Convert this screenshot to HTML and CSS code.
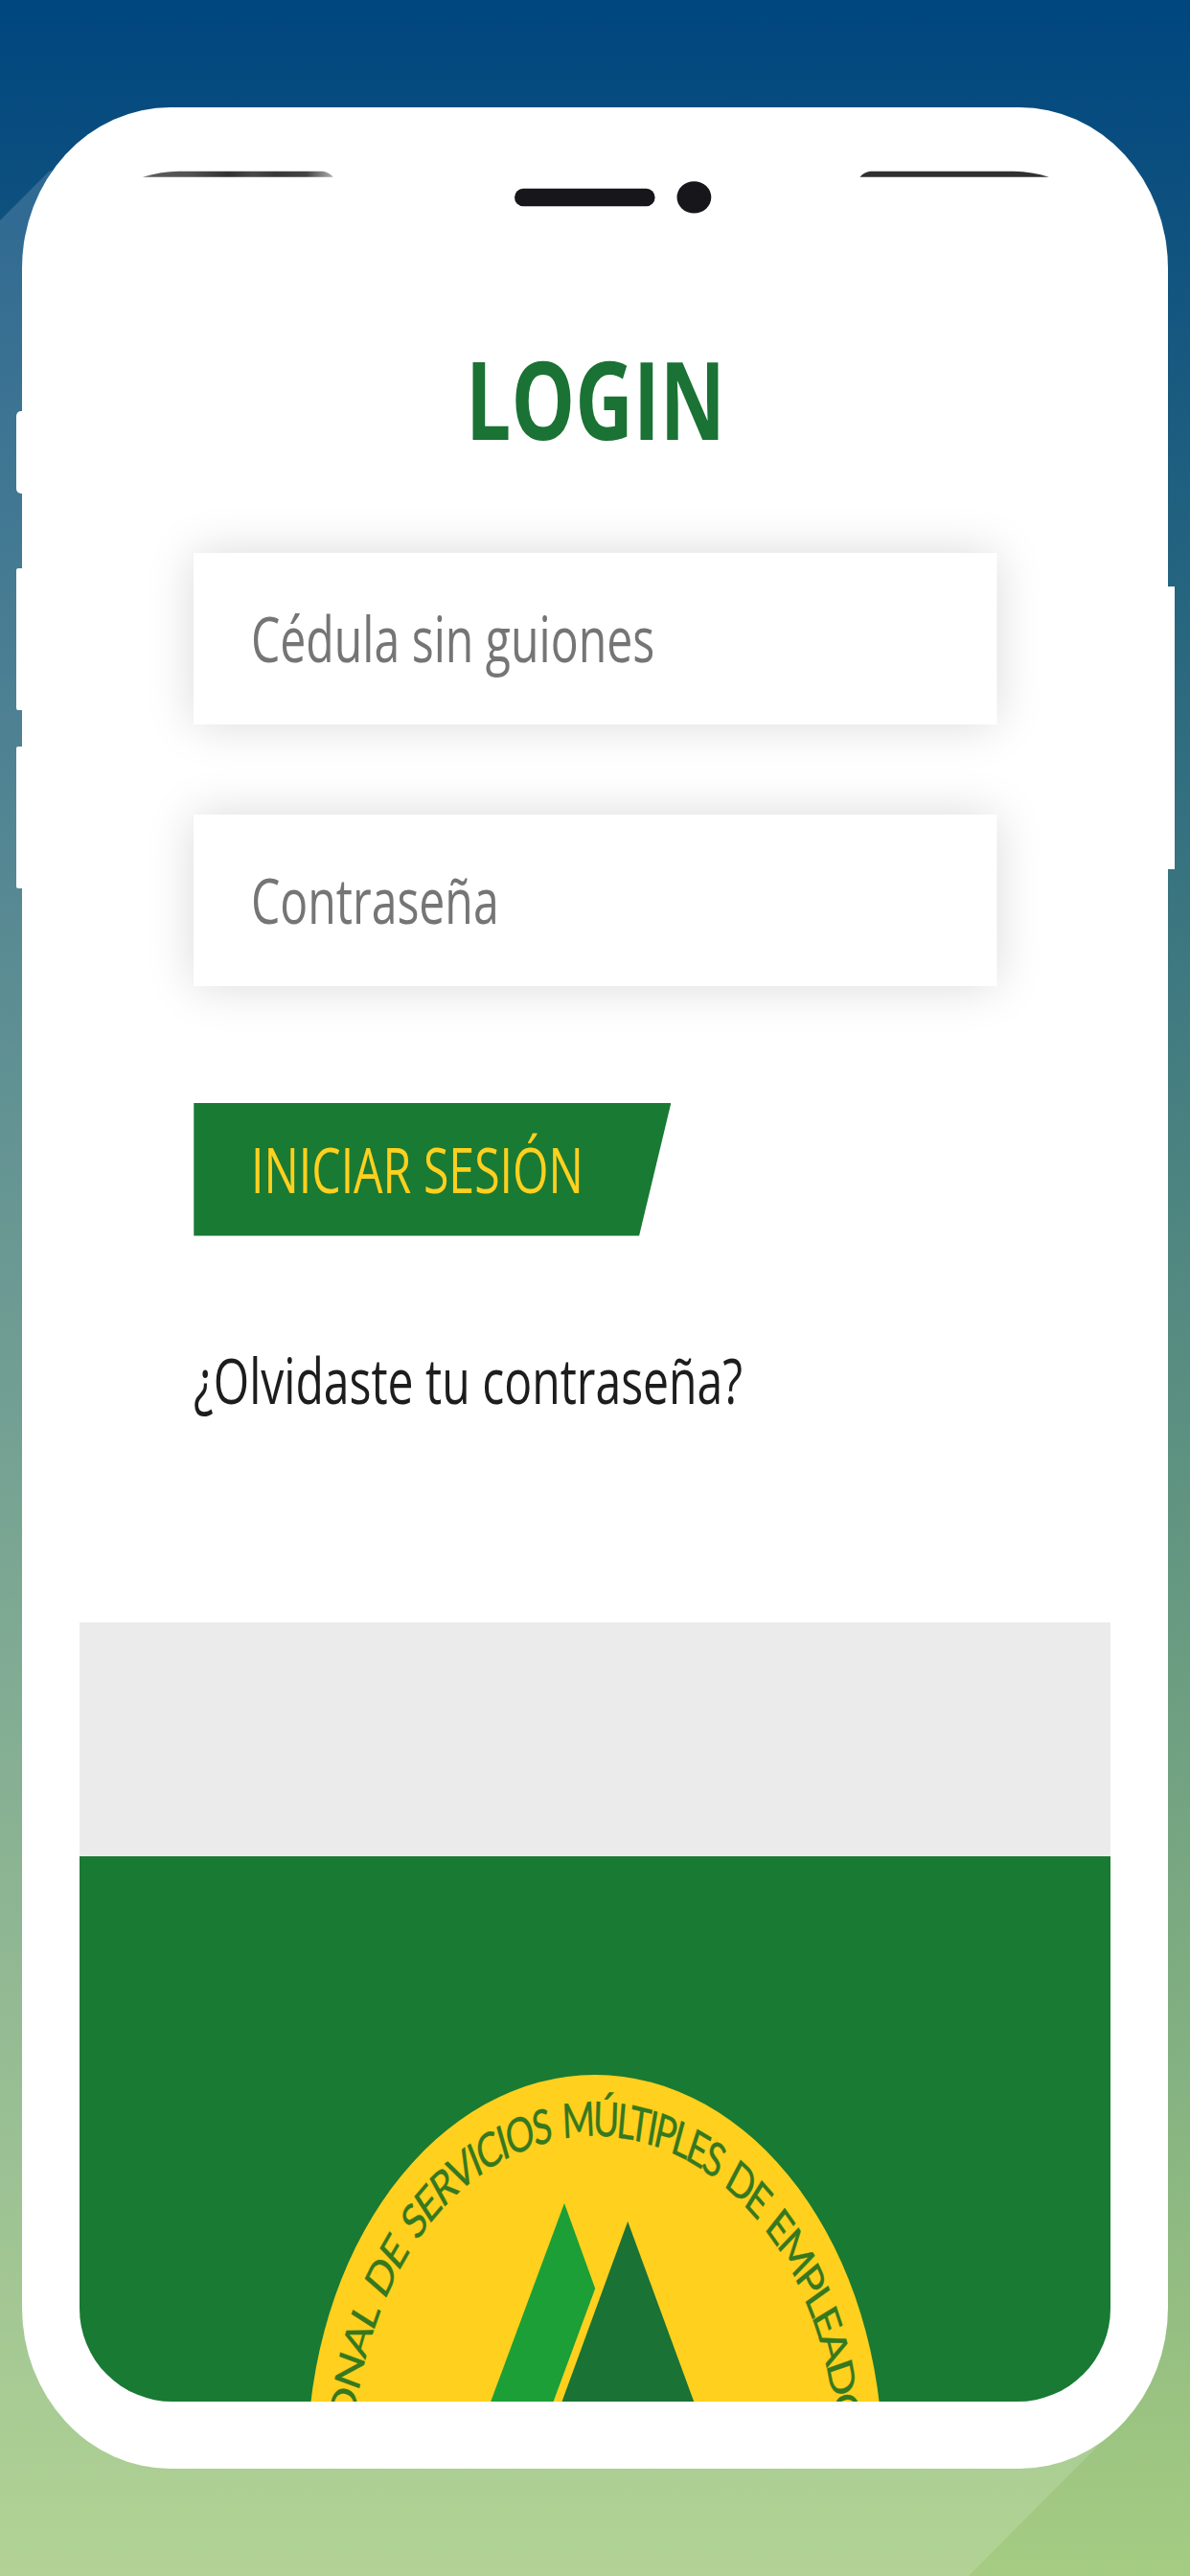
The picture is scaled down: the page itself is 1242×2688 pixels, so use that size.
FILE: index.html
```html
<!DOCTYPE html>
<html lang="es">
<head>
<meta charset="utf-8">
<title>Login</title>
<link rel="stylesheet" href="styles.css">
</head>
<body>
<div class="stage">
  <main class="phone">
    <i class="key key-mute"></i>
    <i class="key key-up"></i>
    <i class="key key-down"></i>
    <i class="key key-power"></i>
    <svg class="notch" width="1197" height="120" viewBox="22.6 111.5 1197 120">
      <defs>
        <linearGradient id="glare" x1="0" x2="1" y1="0" y2="0">
          <stop offset="0" stop-color="#5c5d5c"/>
          <stop offset=".25" stop-color="#515251"/>
          <stop offset=".45" stop-color="#303130"/>
          <stop offset=".58" stop-color="#484948"/>
          <stop offset=".7" stop-color="#363736"/>
          <stop offset=".86" stop-color="#424342"/>
          <stop offset="1" stop-color="#b0b0b0"/>
        </linearGradient>
      </defs>
      <path fill="url(#glare)" d="M148.5 184.3Q168 178.3 186 178.3H336.500Q343 179.500 347.300 184.300Z"/>
      <path fill="#30312f" d="M897 184.300Q901 179.500 908 178.300H1058Q1077 178.800 1094.500 184.300Z"/>
      <rect x="536.600" y="196.300" width="146.600" height="18.400" rx="9" ry="9.200" fill="#17161b"/>
      <ellipse cx="724" cy="205.400" rx="17.900" ry="16.700" fill="#17161b"/>
    </svg>
    <section class="screen">
      <form class="login">
        <h1 class="title"><span class="narrow">LOGIN</span></h1>
        <label class="field"><span class="narrow">Cédula sin guiones</span></label>
        <label class="field"><span class="narrow">Contraseña</span></label>
        <div class="submit"><span class="narrow">INICIAR SESIÓN</span></div>
        <a class="forgot"><span class="narrow">¿Olvidaste tu contraseña?</span></a>
      </form>
      <div class="band"></div>
      <footer class="footer">
        <svg class="logo" width="604" height="341" viewBox="319.800 2165 604 341">
          <ellipse cx="621.800" cy="2569" rx="300.200" ry="404" fill="#ffd01e"/>
          <g transform="translate(621.800 2569) scale(1 1.347)">
            <path id="rim" fill="none" d="M-251.240 24.210A252.400 252.400 0 1 1 251.240 24.210"/>
            <text class="rim-text"><textPath href="#rim" startOffset="51" textLength="743" lengthAdjust="spacing"><tspan class="rim-loose">ONAL DE SERVICIOS </tspan><tspan class="rim-tight">MÚLTIPLES DE EMPLEADO</tspan></textPath></text>
          </g>
          <path fill="#1c9f37" d="M589.800 2299L622 2388L578.400 2506H513Z"/>
          <path fill="#1a7234" d="M656 2318L725 2506H587.300Z"/>
        </svg>
      </footer>
    </section>
  </main>
</div>
</body>
</html>
```
FILE: styles.css
```css
* { box-sizing: border-box; }

body {
  margin: 0;
  font-family: "Open Sans", sans-serif;
}

.stage {
  position: relative;
  width: 1242px;
  height: 2688px;
  padding: 111.5px 22.6px;
  overflow: hidden;
  background: linear-gradient(#00467f, #a5cc82);
}

/* pale diagonal cast behind the handset */
.stage::before {
  content: "";
  position: absolute;
  inset: 0;
  background: rgba(255, 255, 255, .15);
  clip-path: polygon(0 230px, 52px 178px, 600px 300px, 1154px 2544px, 1011px 2688px, 0 2688px);
}

.phone {
  position: relative;
  width: 1196.8px;
  height: 2464.7px;
  padding: 0 60.2px;
  border-radius: 155px / 168px;
  background: #fff;
}

.key {
  position: absolute;
  left: -6px;
  width: 12px;
  border-radius: 5px;
  background: #fff;
}
.key-mute { top: 317px; height: 86px; }
.key-up { top: 481px; height: 148.5px; border-radius: 2px; }
.key-down { top: 667.5px; height: 148px; border-radius: 2px; }
.key-power { top: 500.2px; height: 295px; left: auto; right: -6.3px; border-radius: 0; }

.notch {
  display: block;
  margin-left: -60.2px;
}

.screen {
  display: flex;
  flex-direction: column;
  height: 2274.5px;
  overflow: hidden;
  border-radius: 0 0 97px 97px;
}

.login {
  display: flex;
  flex-direction: column;
  align-items: flex-start;
  height: 1461px;
  padding: 127px 118.500px 0 119.500px;
}

/* the typeface is set condensed */
.narrow {
  display: inline-block;
  white-space: nowrap;
  transform: scaleX(.742);
  transform-origin: left center;
}

.title {
  align-self: center;
  margin: 0 0 105.500px;
  font-size: 113px;
  line-height: 113px;
  color: #1a7234;
}
.title .narrow { transform-origin: center; }

.field {
  position: relative;
  width: 838.500px;
  height: 179px;
  margin-bottom: 93.500px;
  padding-left: 60px;
  font-size: 65.500px;
  line-height: 178px;
  color: #757575;
}
.field::before {
  content: "";
  position: absolute;
  left: 0;
  top: 0;
  width: 134.770%;
  height: 100%;
  transform: scaleX(.742);
  transform-origin: left center;
  background: #fff;
  box-shadow: 0 0 54px rgba(0, 0, 0, .150);
}
.field .narrow {
  position: relative;
  transform: scaleX(.735);
}

.submit {
  width: 498.200px;
  height: 139px;
  margin-top: 28.500px;
  padding-left: 60px;
  background: #197a33;
  color: #ffd01e;
  font-size: 65px;
  line-height: 138px;
  clip-path: polygon(0 0, 100% 0, 93.300% 100%, 0 100%);
}
.submit .narrow { transform: scaleX(.742); }

.forgot {
  margin-top: 116.500px;
  font-size: 65.500px;
  line-height: 68px;
  color: #1d1d1d;
}
.forgot .narrow { transform: scaleX(.734); }

.band {
  height: 244.500px;
  background: #ebebeb;
}

.footer {
  display: flex;
  flex: 1;
  align-items: flex-end;
  justify-content: center;
  background: #197a33;
}

.logo { display: block; }

.rim-text {
  font-family: Lato, sans-serif;
  font-size: 37px;
  word-spacing: 4.500px;
  fill: #35781f;
  stroke: #35781f;
  stroke-width: .3;
}
.rim-loose { letter-spacing: .5px; }
.rim-tight { letter-spacing: -.4px; }
```
